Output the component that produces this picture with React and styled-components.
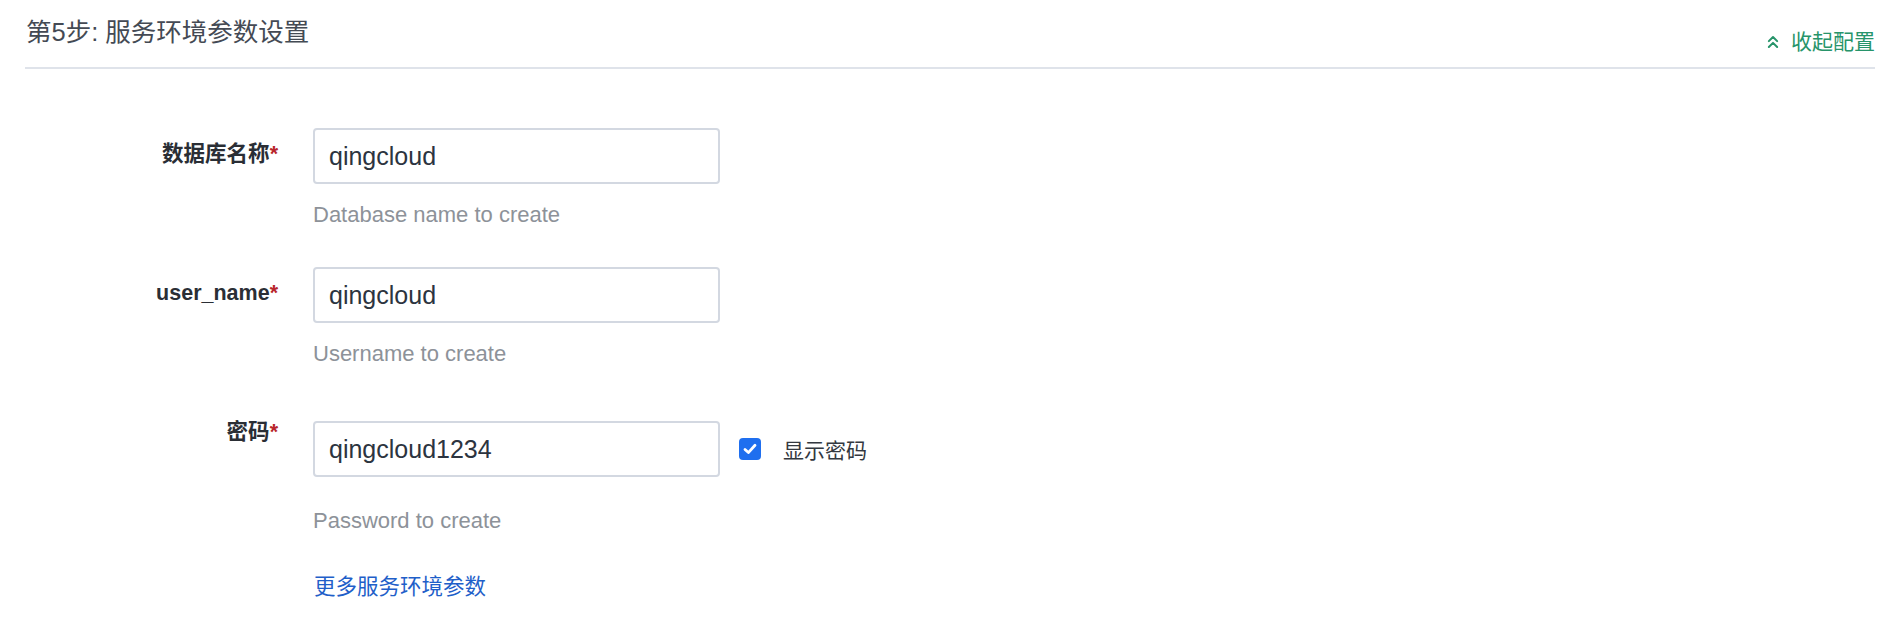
import styled, { createGlobalStyle } from 'styled-components';
import { ChevronsUp } from 'lucide-react';

const GlobalStyle = createGlobalStyle`
  body {
    margin: 0;
    background: #ffffff;
    font-family: "Liberation Sans", "Noto Sans CJK SC", sans-serif;
  }
`;

const Page = styled.div`
  padding: 0 13px 0 25px;
`;

const Header = styled.div`
  box-sizing: border-box;
  height: 69px;
  display: flex;
  justify-content: space-between;
  align-items: flex-start;
  border-bottom: 2px solid #dfe3ea;
`;

const Title = styled.h2`
  margin: 15px 0 0 1px;
  font-size: 25.5px;
  line-height: 34px;
  font-weight: 400;
  color: #444a54;
`;

const Toggle = styled.a`
  align-self: flex-end;
  margin-bottom: 11px;
  display: flex;
  align-items: center;
  gap: 8px;
  font-size: 21px;
  line-height: 28px;
  color: #27946a;
  text-decoration: none;
  cursor: pointer;
`;

const Form = styled.div`
  padding-top: 59px;
  display: flex;
  flex-direction: column;
  gap: 37px;
`;

const Row = styled.div`
  display: flex;
  align-items: flex-start;
  gap: 35px;
`;

const Label = styled.div`
  width: 253px;
  text-align: right;
  font-size: 21.5px;
  line-height: 52px;
  font-weight: 700;
  color: #2a2e35;

  span {
    color: #b8262b;
  }
`;

const Field = styled.div`
  display: flex;
  flex-direction: column;
  padding-top: ${p => (p.$addon ? '15px' : '0')};
`;

const InputLine = styled.div`
  display: flex;
  align-items: center;
  gap: 19px;
`;

const Input = styled.input`
  box-sizing: border-box;
  width: 407px;
  height: 56px;
  padding: 0 14px;
  border: 2px solid #d3d8e1;
  border-radius: 4px;
  font-family: inherit;
  font-size: 25px;
  color: #2c3440;
  outline: none;
`;

const Check = styled.label`
  display: flex;
  align-items: center;
  gap: 22px;
  font-size: 21px;
  color: #333840;
  cursor: pointer;
`;

const Box = styled.span`
  width: 22px;
  height: 22px;
  border-radius: 4px;
  background: #1f6fef;
  display: flex;
  align-items: center;
  justify-content: center;
`;

const Help = styled.div`
  margin-top: ${p => (p.$addon ? '29px' : '16px')};
  font-size: 22px;
  line-height: 30px;
  color: #8d9299;
`;

const MoreLink = styled.a`
  margin: -1px 0 0 1px;
  font-size: 21.5px;
  line-height: 30px;
  color: #1f5fc9;
  text-decoration: none;
  cursor: pointer;
`;

const fields = [
  { label: '数据库名称', value: 'qingcloud', help: 'Database name to create' },
  { label: 'user_name', value: 'qingcloud', help: 'Username to create' },
  { label: '密码', value: 'qingcloud1234', help: 'Password to create', showPwd: true },
];

export default function App() {
  return (
    <Page>
      <GlobalStyle />
      <Header>
        <Title>第5步: 服务环境参数设置</Title>
        <Toggle>
          <ChevronsUp size={20} strokeWidth={2.4} />
          收起配置
        </Toggle>
      </Header>
      <Form>
        {fields.map(f => (
          <Row key={f.label}>
            <Label>
              {f.label}
              <span>*</span>
            </Label>
            <Field $addon={f.showPwd}>
              <InputLine>
                <Input type="text" defaultValue={f.value} />
                {f.showPwd && (
                  <Check>
                    <Box>
                      <svg width="16" height="16" viewBox="0 0 16 16">
                        <path d="M3 8.4 L6.4 11.6 L13 4.2" fill="none" stroke="#fff" strokeWidth="2.8" strokeLinecap="round" strokeLinejoin="round" />
                      </svg>
                    </Box>
                    显示密码
                  </Check>
                )}
              </InputLine>
              <Help $addon={f.showPwd}>{f.help}</Help>
            </Field>
          </Row>
        ))}
        <Row>
          <Label />
          <MoreLink>更多服务环境参数</MoreLink>
        </Row>
      </Form>
    </Page>
  );
}
